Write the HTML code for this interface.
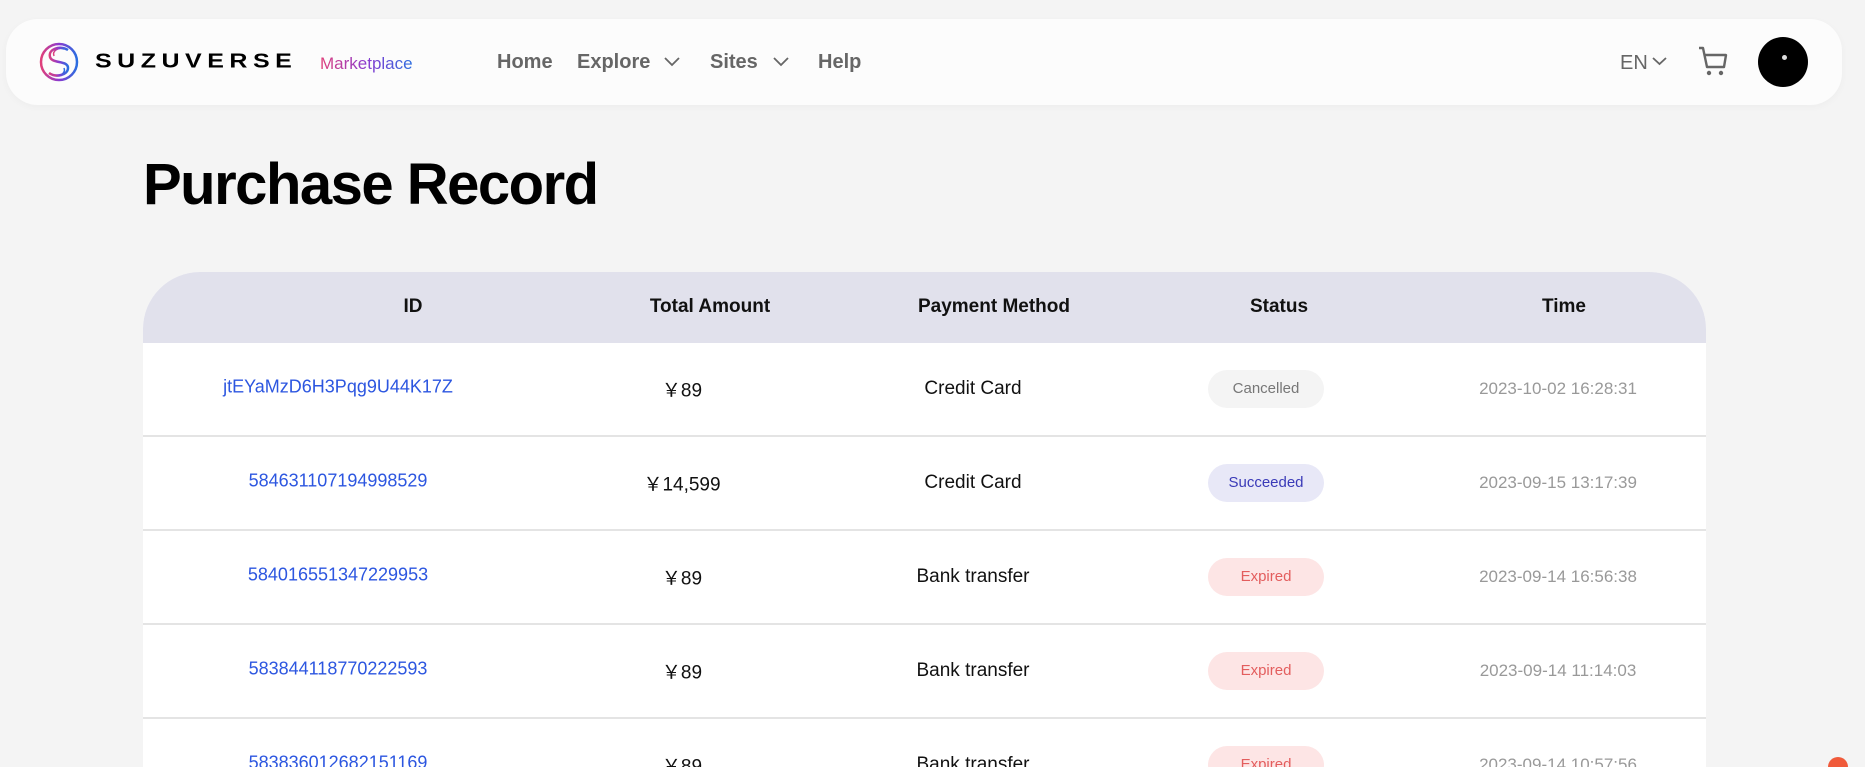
<!DOCTYPE html>
<html style="overflow:hidden;height:767px"><head><meta charset="utf-8"><style>
*{margin:0;padding:0;box-sizing:border-box}
body{width:1865px;height:767px;overflow:hidden;background:#f4f4f4;font-family:"Liberation Sans",Arial,sans-serif;position:relative}
.hdr{position:absolute;left:6px;top:19px;width:1836px;height:86px;background:#fcfcfc;border-radius:32px;box-shadow:0 2px 8px rgba(0,0,0,0.03)}
.a{position:absolute;white-space:nowrap}
.c{position:absolute;white-space:nowrap;transform:translate(-50%,-50%)}
.nav{font-size:20px;font-weight:bold;color:#666;top:51px}
h1{position:absolute;left:143px;top:151px;font-size:58px;font-weight:bold;color:#000;letter-spacing:-1.5px}
.tbl{position:absolute;left:143px;top:272px;width:1563px;height:495px;background:#fff;border-radius:57px 57px 0 0;overflow:hidden}
.th{position:absolute;left:0;top:0;width:100%;height:71px;background:#e1e1ec}
.hd{font-size:19px;font-weight:bold;color:#111;top:35px}
.row{position:absolute;left:0;width:100%;height:94px;border-bottom:2px solid #e4e4e4}
.id{color:#2c56e0;font-size:18px}
.am{color:#111;font-size:19px}
.pm{color:#111;font-size:19px}
.tm{color:#999;font-size:17px}
.pill{position:absolute;width:116px;height:38px;border-radius:19px;font-size:15px;line-height:38px;text-align:center;left:1065px;transform:translateY(-50%)}
.can{background:#f4f4f4;color:#777}
.suc{background:#e8e8f7;color:#3a3ab8}
.exp{background:#fde5e5;color:#e35d5d}
</style></head><body>
<div class="hdr"></div>
<svg class="a" style="left:38px;top:41px" width="42" height="42" viewBox="0 0 42 42">
<defs><linearGradient id="g" x1="0" y1="0" x2="1" y2="0"><stop offset="0" stop-color="#e0407a"/><stop offset=".5" stop-color="#8a3ad0"/><stop offset="1" stop-color="#2a6ee0"/></linearGradient></defs>
<circle cx="21" cy="21" r="18" fill="none" stroke="url(#g)" stroke-width="2.5"/>
<path d="M30 9 C22 4 10 8 12 16 C14 23 30 19 30 27 C30 34 18 37 11 32" fill="none" stroke="url(#g)" stroke-width="2.5"/>
<path d="M26 8 C20 6 14 10 16 15" fill="none" stroke="url(#g)" stroke-width="1.5"/>
<path d="M16 34 C22 36 28 32 26 27" fill="none" stroke="url(#g)" stroke-width="1.5"/>
</svg>
<div class="a" style="left:95px;top:47px;font-size:25px;letter-spacing:5.5px;color:#000;font-weight:bold;transform:scaleY(0.82);transform-origin:left center">SUZUVERSE</div>
<div class="a" style="left:320px;top:54px;font-size:17px;background:linear-gradient(90deg,#e0407a,#8a3ad0,#2a6ee0);-webkit-background-clip:text;background-clip:text;color:transparent">Marketplace</div>
<div class="a nav" style="left:497px">Home</div>
<div class="a nav" style="left:577px">Explore</div>
<svg class="a" style="left:664px;top:57px" width="16" height="10"><path d="M1 1 L8 8 L15 1" fill="none" stroke="#666" stroke-width="1.8"/></svg>
<div class="a nav" style="left:710px">Sites</div>
<svg class="a" style="left:773px;top:57px" width="16" height="10"><path d="M1 1 L8 8 L15 1" fill="none" stroke="#666" stroke-width="1.8"/></svg>
<div class="a nav" style="left:818px">Help</div>
<div class="a" style="left:1620px;top:52px;font-size:20px;color:#666">EN</div>
<svg class="a" style="left:1652px;top:57px" width="15" height="9"><path d="M1 1 L7.5 7 L14 1" fill="none" stroke="#666" stroke-width="1.8"/></svg>
<svg class="a" style="left:1697px;top:45px" width="32" height="32" viewBox="0 0 32 32"><path d="M2 3 H6 L10 22 H27 L29 10 H8" fill="none" stroke="#666" stroke-width="2.4" stroke-linejoin="round"/><circle cx="12" cy="28" r="2.2" fill="#666"/><circle cx="24" cy="28" r="2.2" fill="#666"/></svg>
<div class="a" style="left:1758px;top:37px;width:50px;height:50px;border-radius:50%;background:#000"></div>
<div class="a" style="left:1782px;top:55px;width:5px;height:5px;border-radius:50%;background:#ddd"></div>
<h1>Purchase Record</h1>
<div class="tbl">
<div class="th"></div>
<div class="c hd" style="left:270px">ID</div>
<div class="c hd" style="left:567px">Total Amount</div>
<div class="c hd" style="left:851px">Payment Method</div>
<div class="c hd" style="left:1136px">Status</div>
<div class="c hd" style="left:1421px">Time</div>

<div class="row" style="top:71px">
<div class="c id" style="left:195px;top:44px">jtEYaMzD6H3Pqg9U44K17Z</div>
<div class="c am" style="left:539px;top:46px">￥89</div>
<div class="c pm" style="left:830px;top:46px">Credit Card</div>
<div class="pill can" style="top:46px">Cancelled</div>
<div class="c tm" style="left:1415px;top:46px">2023-10-02 16:28:31</div>
</div>
<div class="row" style="top:165px">
<div class="c id" style="left:195px;top:44px">584631107194998529</div>
<div class="c am" style="left:539px;top:46px">￥14,599</div>
<div class="c pm" style="left:830px;top:46px">Credit Card</div>
<div class="pill suc" style="top:46px">Succeeded</div>
<div class="c tm" style="left:1415px;top:46px">2023-09-15 13:17:39</div>
</div>
<div class="row" style="top:259px">
<div class="c id" style="left:195px;top:44px">584016551347229953</div>
<div class="c am" style="left:539px;top:46px">￥89</div>
<div class="c pm" style="left:830px;top:46px">Bank transfer</div>
<div class="pill exp" style="top:46px">Expired</div>
<div class="c tm" style="left:1415px;top:46px">2023-09-14 16:56:38</div>
</div>
<div class="row" style="top:353px">
<div class="c id" style="left:195px;top:44px">583844118770222593</div>
<div class="c am" style="left:539px;top:46px">￥89</div>
<div class="c pm" style="left:830px;top:46px">Bank transfer</div>
<div class="pill exp" style="top:46px">Expired</div>
<div class="c tm" style="left:1415px;top:46px">2023-09-14 11:14:03</div>
</div>
<div class="row" style="top:447px;border:none">
<div class="c id" style="left:195px;top:44px">583836012682151169</div>
<div class="c am" style="left:539px;top:46px">￥89</div>
<div class="c pm" style="left:830px;top:46px">Bank transfer</div>
<div class="pill exp" style="top:46px">Expired</div>
<div class="c tm" style="left:1415px;top:46px">2023-09-14 10:57:56</div>
</div>
</div>
<div class="a" style="left:1828px;top:757px;width:20px;height:10px;border-radius:10px 10px 0 0;background:#f05a3a"></div>
</body></html>
